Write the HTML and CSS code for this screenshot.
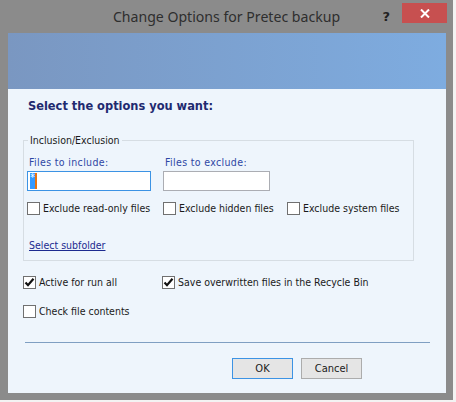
FILE: index.html
```html
<!DOCTYPE html>
<html>
<head>
<meta charset="utf-8">
<title>Change Options for Pretec backup</title>
<link rel="stylesheet" href="styles.css">
</head>
<body>
<div class="window">
  <div class="titlebar">
    <div class="title">Change Options for Pretec backup</div>
    <div class="controls">
      <span class="help">?</span>
      <span class="close">
        <svg width="10" height="9" viewBox="0 0 10 9"><path d="M1 0.5 L9 8.5 M9 0.5 L1 8.5" stroke="#fff" stroke-width="2"/></svg>
      </span>
    </div>
  </div>
  <div class="client">
    <div class="banner"></div>
    <div class="content">
      <h1 class="heading">Select the options you want:</h1>
      <fieldset class="group">
        <legend>Inclusion/Exclusion</legend>
        <div class="filters">
          <label class="field-label">Files to include:</label>
          <label class="field-label">Files to exclude:</label>
          <span></span>
          <div class="input focused"><span class="sel">*</span><span class="caret"></span></div>
          <div class="input"></div>
          <span></span>
          <div class="check"><span class="box"></span><span>Exclude read-only files</span></div>
          <div class="check"><span class="box"></span><span>Exclude hidden files</span></div>
          <div class="check"><span class="box"></span><span>Exclude system files</span></div>
        </div>
        <a class="link" href="#">Select subfolder</a>
      </fieldset>
      <div class="options">
        <div class="check"><span class="box"><svg width="11" height="11" viewBox="0 0 11 11"><path d="M1.5 5.5 L4 8.2 L9.5 1.8" fill="none" stroke="#111" stroke-width="2.2"/></svg></span><span>Active for run all</span></div>
        <div class="check"><span class="box"><svg width="11" height="11" viewBox="0 0 11 11"><path d="M1.5 5.5 L4 8.2 L9.5 1.8" fill="none" stroke="#111" stroke-width="2.2"/></svg></span><span>Save overwritten files in the Recycle Bin</span></div>
        <div class="check"><span class="box"></span><span>Check file contents</span></div>
      </div>
      <div class="separator"></div>
      <div class="buttons">
        <button class="btn default">OK</button>
        <button class="btn">Cancel</button>
      </div>
    </div>
  </div>
</div>
</body>
</html>
```
FILE: styles.css
```css
html, body {
  margin: 0;
  padding: 0;
}
body {
  background: #f3f3f3;
  width: 456px;
  height: 402px;
  font-family: "DejaVu Sans Condensed", "DejaVu Sans", sans-serif;
  font-size: 10.5px;
  color: #1a1a1a;
}

.window {
  width: 453px;
  height: 400px;
  box-sizing: border-box;
  background: #8b8b8b;
  padding: 0 7px 7px 8px;
  display: flex;
  flex-direction: column;
}

/* title bar */
.titlebar {
  height: 33px;
  margin: 0 -7px 0 -8px;
  display: grid;
  grid-template-columns: 1fr;
}
.title {
  grid-row: 1;
  grid-column: 1;
  text-align: center;
  font-family: "Noto Sans", "Open Sans", sans-serif;
  font-size: 14.1px;
  line-height: 33px;
  color: #2e2e2e;
}
.controls {
  grid-row: 1;
  grid-column: 1;
  justify-self: end;
  display: flex;
  align-items: flex-start;
  margin-right: 6px;
  margin-top: 3px;
}
.help {
  font-family: "DejaVu Sans", sans-serif;
  font-weight: bold;
  font-size: 13px;
  line-height: 13px;
  color: #222;
  margin-top: 7px;
  margin-right: 12px;
}
.close {
  width: 45px;
  height: 20px;
  background: #c75050;
  display: flex;
  align-items: center;
  justify-content: center;
}

/* client area */
.client {
  width: 438px;
  height: 360px;
  background: #eef5fc;
  display: flex;
  flex-direction: column;
}
.banner {
  height: 56px;
  background: linear-gradient(to right, #7a97c1, #7eace0);
}
.content {
  padding-top: 9px;
}
.heading {
  margin: 0 0 0 20px;
  font-family: "DejaVu Sans Condensed", "DejaVu Sans", sans-serif;
  font-weight: bold;
  font-size: 12.7px;
  line-height: 16px;
  color: #1f2a70;
}

/* inclusion/exclusion group */
.group {
  margin: 19px 0 0 15px;
  width: 391px;
  box-sizing: border-box;
  border: 1px solid #d6dde3;
  padding: 0 0 8px 3px;
}
.group legend {
  margin-left: 1px;
  padding: 0 2px;
  line-height: 14px;
  color: #1a1a1a;
}
.filters {
  display: grid;
  grid-template-columns: 136px 124px auto;
  margin-top: 8px;
}
.field-label {
  color: #2f47a4;
  line-height: 14px;
  padding-left: 2px;
  margin-bottom: 2px;
  letter-spacing: 0.35px;
}
.input {
  height: 20px;
  box-sizing: border-box;
  border: 1px solid #abadb3;
  background: #fff;
  display: flex;
  align-items: center;
  padding-left: 2px;
}
.filters .input:nth-of-type(1) {
  width: 124px;
}
.filters > .input + .input {
  width: 107px;
}
.input.focused {
  border-color: #3c93e4;
}
.sel {
  width: 5px;
  height: 16px;
  background: #3399ff;
  color: #fff;
  font-size: 10px;
  line-height: 10px;
  text-align: center;
}
.caret {
  width: 2px;
  height: 16px;
  background: #e8720c;
}
.filters .check {
  margin-top: 10px;
}

.check {
  display: flex;
  align-items: center;
  gap: 3px;
  line-height: 14px;
  white-space: nowrap;
}
.box {
  width: 13px;
  height: 13px;
  box-sizing: border-box;
  border: 1px solid #707070;
  background: #fff;
  display: flex;
  align-items: center;
  justify-content: center;
}

.link {
  display: block;
  margin: 23px 0 0 2px;
  line-height: 14px;
  color: #1c2a90;
  text-decoration: underline;
  width: max-content;
}

/* standalone options */
.options {
  margin: 14px 0 0 15px;
  display: grid;
  grid-template-columns: 139px auto;
  row-gap: 15px;
}

.separator {
  margin: 24px 0 0 17px;
  width: 405px;
  height: 1px;
  background: #7f9fc2;
}

.buttons {
  display: flex;
  justify-content: flex-end;
  gap: 8px;
  padding-right: 84px;
  margin-top: 15px;
}
.btn {
  width: 61px;
  height: 21px;
  box-sizing: border-box;
  border: 1px solid #acacac;
  background: #e5e5e5;
  font-family: inherit;
  font-size: 11px;
  color: #1a1a1a;
  padding: 0;
}
.btn.default {
  border-color: #3c93e4;
}
```
